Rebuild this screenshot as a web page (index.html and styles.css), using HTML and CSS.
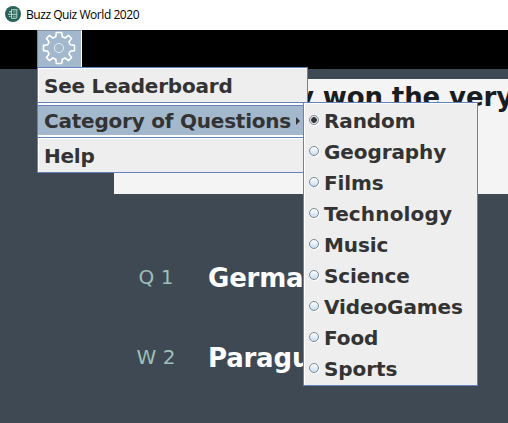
FILE: index.html
```html
<!DOCTYPE html>
<html lang="en">
<head>
<meta charset="utf-8">
<title>Buzz Quiz World 2020</title>
<link rel="stylesheet" href="styles.css">
</head>
<body>
<div class="window">
  <header class="titlebar">
    <svg class="logo" width="16" height="16" viewBox="0 0 16 16">
      <circle cx="8" cy="8" r="8" fill="#286258"/>
      <path d="M6.5 3.8H12.5M4 5.8H6M3 8.2H12M4 10.5H5.5M6.5 12.2H11.5" stroke="#c5dcd3" stroke-width="1.1"/>
      <path d="M6.5 3.5V12.5M11.8 4V12" stroke="#b4d0c6" stroke-width="1"/>
      <path d="M8 5.9H10.8M8 10.2H10.8" stroke="#94bbae" stroke-width="1"/>
    </svg>
    <span class="title">Buzz Quiz World 2020</span>
  </header>
  <nav class="menubar">
    <button class="settings" aria-label="Settings">
      <svg width="34" height="34" viewBox="-17 -17 34 34" fill="none" stroke="#fff" stroke-width="1.6" stroke-linejoin="round">
        <path d="M-2.6-15.5H2.6L3.3-11.2L6.2-10L9.5-12.6L12.6-9.5L10-6.2L11.2-3.3L15.5-2.6V2.6L11.2 3.3L10 6.2L12.6 9.5L9.5 12.6L6.2 10L3.3 11.2L2.6 15.5H-2.6L-3.3 11.2L-6.2 10L-9.5 12.6L-12.6 9.5L-10 6.2L-11.2 3.3L-15.5 2.6V-2.6L-11.2-3.3L-10-6.2L-12.6-9.5L-9.5-12.6L-6.2-10L-3.3-11.2Z"/>
        <circle r="4.6" stroke-width="1" stroke="#e4ebf2"/>
      </svg>
    </button>
  </nav>
  <main class="game">
    <section class="question">y won the very</section>
    <div class="answers">
      <div class="answer"><span class="key">Q 1</span><span class="text">Germa</span></div>
      <div class="answer"><span class="key">W 2</span><span class="text">Paragu</span></div>
    </div>
  </main>
  <div class="menu">
    <div class="item"><span>See Leaderboard</span></div>
    <div class="item active"><span>Category of Questions</span><svg class="arrow" width="4" height="8" viewBox="0 0 4 8"><path d="M0 0L4 4L0 8Z" fill="#333"/></svg></div>
    <div class="item"><span class="help">Help</span></div>
  </div>
  <div class="submenu">
    <label class="option"><i class="radio checked"></i><span>Random</span></label>
    <label class="option"><i class="radio"></i><span>Geography</span></label>
    <label class="option"><i class="radio"></i><span>Films</span></label>
    <label class="option"><i class="radio"></i><span class="wide">Technology</span></label>
    <label class="option"><i class="radio"></i><span>Music</span></label>
    <label class="option"><i class="radio"></i><span>Science</span></label>
    <label class="option"><i class="radio"></i><span>VideoGames</span></label>
    <label class="option"><i class="radio"></i><span>Food</span></label>
    <label class="option"><i class="radio"></i><span>Sports</span></label>
  </div>
</div>
</body>
</html>
```
FILE: styles.css
```css
* { box-sizing: border-box; }
body { margin: 0; font-family: "DejaVu Sans", sans-serif; }
.window { position: relative; width: 508px; height: 423px; overflow: hidden; background: #3e4953; display: flex; flex-direction: column; }
.titlebar { height: 30px; flex: none; background: #fff; display: flex; align-items: center; padding: 0 5px 2px; gap: 5px; }
.title { font: 12px "Open Sans", sans-serif; letter-spacing: -0.45px; color: #000; white-space: nowrap; padding-top: 1px; }
.menubar { height: 39px; flex: none; background: #000; padding-left: 37px; }
.settings { display: flex; justify-content: center; align-items: center; width: 45px; height: 37px; padding: 0 2px 2px 0; border: 0; border-left: 1px solid #7a8a99; border-top: 1px solid #8495a8; border-right: 1px solid #fff; background: #a3b8cc; }
.settings svg { flex: none; }
.game { flex: 1; padding: 10px 0 0 114px; }
.question { height: 115px; background: #f4f4f4; padding: 1px 0 0 183px; font-size: 26px; font-weight: bold; line-height: 34px; letter-spacing: -0.1px; color: #1a1d20; white-space: nowrap; overflow: hidden; }
.answers { padding-top: 43px; }
.answer { height: 80px; display: flex; align-items: center; }
.key { width: 84px; text-align: center; font-size: 20px; color: #9dbfb8; }
.text { margin-left: 10px; padding-top: 2px; font-size: 26px; font-weight: bold; letter-spacing: -0.2px; color: #fff; }
.menu, .submenu { position: absolute; border: 1px solid #6382bf; background: #eee; color: #333; font-size: 20px; font-weight: bold; white-space: nowrap; }
.menu { left: 37px; top: 67px; width: 271px; height: 106px; display: flex; flex-direction: column; letter-spacing: -0.22px; }
.item { height: 34px; display: flex; align-items: center; padding-left: 5px; border-top: 1px solid #fff; border-left: 1px solid #fff; }
.item.active { height: 36px; border-top: 1px solid #6382bf; border-bottom: 1px solid #6382bf; border-left: 0; padding: 1px 0 0 6px; background: linear-gradient(#fff 0 2px, #6382bf 2px 3px, #a3b8cc 3px 32px, #fff 32px); }
.arrow { margin-left: 5px; flex: none; }
.submenu { left: 303px; top: 102px; width: 175px; height: 284px; padding: 2px 0 0 5px; box-shadow: inset 1px 1px #fff; letter-spacing: -0.1px; }
.option { height: 31px; display: flex; align-items: center; gap: 5px; }
.wide { letter-spacing: 0.15px; }
.radio { width: 10px; height: 10px; flex: none; border: 1px solid #7a8a99; border-radius: 50%; background: linear-gradient(#fff, #c8ddf2); margin-bottom: 2px; box-shadow: 1px 1px #fff; }
.radio.checked { background: radial-gradient(circle, #333 0 2.5px, #e4ebf2 3.2px); }
```
